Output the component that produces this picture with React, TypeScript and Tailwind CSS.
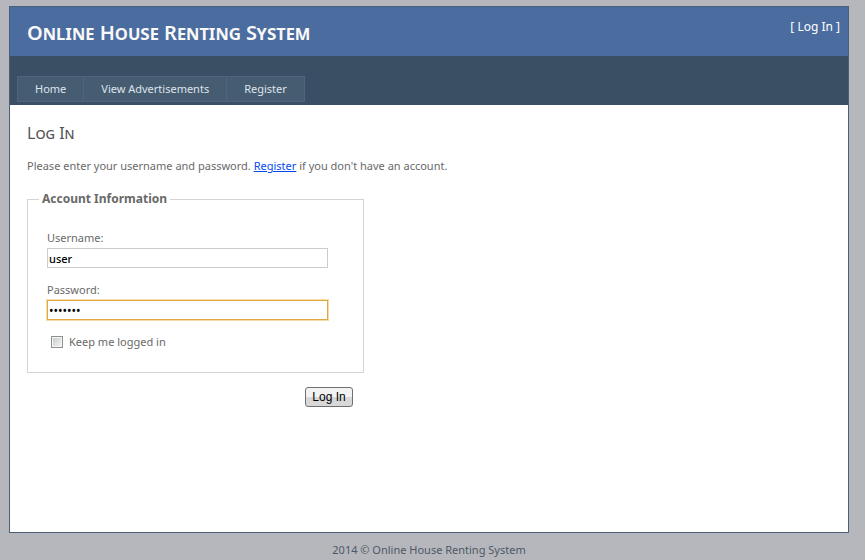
import { useState } from "react";

const menu = ["Home", "View Advertisements", "Register"];

export default function App() {
  const [user, setUser] = useState("user");
  const [password, setPassword] = useState("secret7");

  return (
    <div className="flex min-h-screen flex-col bg-[#b6b7bc] pl-[9px] pr-4 pt-1.5 font-['Noto_Sans','Open_Sans',sans-serif] text-[11px] text-[#696969]">
      <div className="flex flex-1 flex-col border border-[#496077] bg-white">
        <header>
          <div className="flex h-[49px] items-start justify-between bg-[#4b6c9e] pl-[17px] pr-2">
            <h1 className="pt-2.5 text-[20px] leading-8 font-semibold text-[#f9f9f9] [font-variant:small-caps]">
              Online House Renting System
            </h1>
            <div className="pt-2.5 text-xs leading-5 text-white">
              [ <a href="#login">Log In</a> ]
            </div>
          </div>
          <nav className="bg-[#3a4f63] px-[7px] pt-5 pb-[3px]">
            <ul className="flex">
              {menu.map((item) => (
                <li key={item} className="-mr-px">
                  <a
                    href="#menu"
                    className="block border border-[#4e667d] bg-[#465c71] px-[17px] py-[3px] leading-[18px] text-[#dde4ec]"
                  >
                    {item}
                  </a>
                </li>
              ))}
            </ul>
          </nav>
        </header>

        <main className="flex-1 px-[17px] pt-4">
          <h2 className="text-base leading-6 text-[#555555] [font-variant:small-caps]">Log In</h2>
          <p className="pt-3 leading-[18px]">
            Please enter your username and password.{" "}
            <a href="#register" className="text-[#034af3] underline">
              Register
            </a>{" "}
            if you don't have an account.
          </p>

          <form className="w-[337px] pt-4" onSubmit={(e) => e.preventDefault()}>
            <fieldset className="border border-[#d4d4d4] px-[11px] pb-5">
              <legend className="px-[3px] text-xs leading-4 font-bold">Account Information</legend>
              <div className="px-2 pt-[21px]">
                <label htmlFor="username" className="block leading-5">
                  Username:
                </label>
                <input
                  id="username"
                  type="text"
                  value={user}
                  onChange={(e) => setUser(e.target.value)}
                  className="block h-5 w-[281px] border border-[#cccccc] bg-white px-px font-medium text-black outline-none"
                />
                <label htmlFor="password" className="mt-3 block leading-5">
                  Password:
                </label>
                <input
                  id="password"
                  type="password"
                  value={password}
                  onChange={(e) => setPassword(e.target.value)}
                  className="block h-5 w-[281px] border border-[#e0a840] bg-white px-px text-xs text-black outline outline-[#f5dca8]"
                />
                <div className="flex items-center gap-1.5 pt-3 pl-1">
                  <input
                    id="keep"
                    type="checkbox"
                    className="size-3 appearance-none border border-[#8e8f8f] bg-linear-to-br from-[#c4c8cc] to-[#f6f6f6] shadow-[inset_0_0_0_1px_#f4f4f4] checked:bg-[#4b6c9e]"
                  />
                  <label htmlFor="keep" className="leading-5">
                    Keep me logged in
                  </label>
                </div>
              </div>
            </fieldset>
            <div className="flex justify-end pt-3.5 pr-[11px]">
              <button
                type="submit"
                className="h-5 w-12 rounded-[3px] border border-[#707070] bg-linear-to-b from-[#f2f2f2] from-50% to-[#d8d8d8] to-50% font-['Liberation_Sans',Arial,sans-serif] text-xs leading-4 text-black"
              >
                Log In
              </button>
            </div>
          </form>
        </main>
      </div>
      <footer className="pt-2 pb-px text-center leading-[18px] text-[#4e5766]">2014 © Online House Renting System</footer>
    </div>
  );
}
